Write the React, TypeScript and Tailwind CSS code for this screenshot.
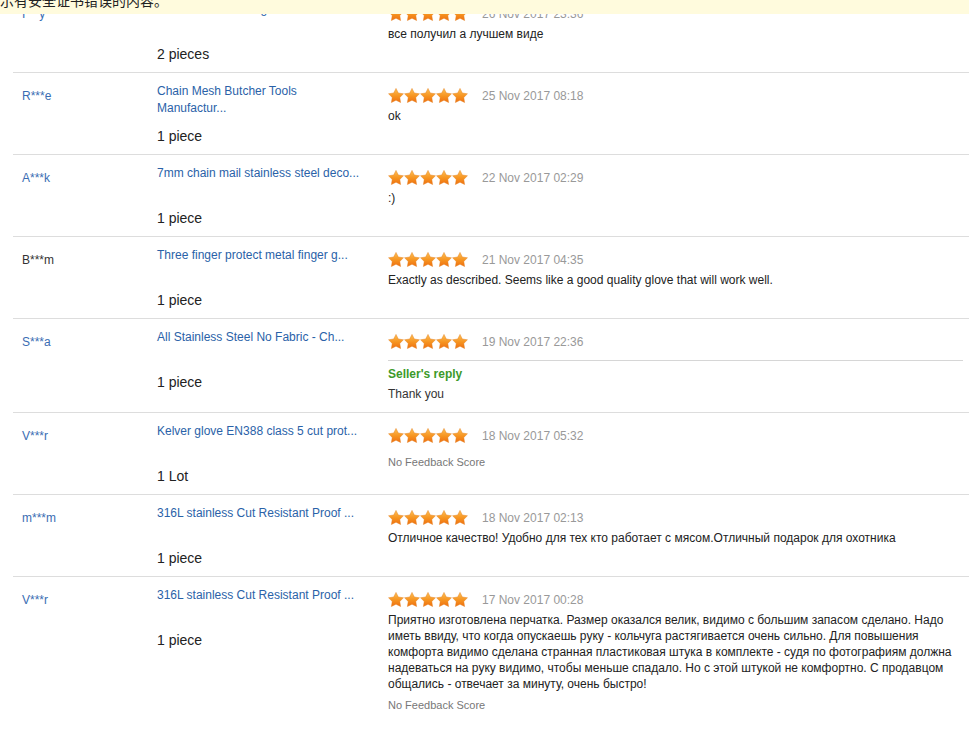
import React from 'react';

type Review = {
  buyer: string;
  buyerDark?: boolean;
  product: string;
  quantity: string;
  date: string;
  comment?: string;
  noScore?: boolean;
  reply?: string;
};

const reviews: Review[] = [
  {
    buyer: 'I***y',
    product: 'Chain mail butcher glove stainless...',
    quantity: '2 pieces',
    date: '26 Nov 2017 23:36',
    comment: 'все получил а лучшем виде',
  },
  {
    buyer: 'R***e',
    product: 'Chain Mesh Butcher Tools Manufactur...',
    quantity: '1 piece',
    date: '25 Nov 2017 08:18',
    comment: 'ok',
  },
  {
    buyer: 'A***k',
    product: '7mm chain mail stainless steel deco...',
    quantity: '1 piece',
    date: '22 Nov 2017 02:29',
    comment: ':)',
  },
  {
    buyer: 'B***m',
    buyerDark: true,
    product: 'Three finger protect metal finger g...',
    quantity: '1 piece',
    date: '21 Nov 2017 04:35',
    comment: 'Exactly as described. Seems like a good quality glove that will work well.',
  },
  {
    buyer: 'S***a',
    product: 'All Stainless Steel No Fabric - Ch...',
    quantity: '1 piece',
    date: '19 Nov 2017 22:36',
    reply: 'Thank you',
  },
  {
    buyer: 'V***r',
    product: 'Kelver glove EN388 class 5 cut prot...',
    quantity: '1 Lot',
    date: '18 Nov 2017 05:32',
    noScore: true,
  },
  {
    buyer: 'm***m',
    product: '316L stainless Cut Resistant Proof ...',
    quantity: '1 piece',
    date: '18 Nov 2017 02:13',
    comment: 'Отличное качество! Удобно для тех кто работает с мясом.Отличный подарок для охотника',
  },
  {
    buyer: 'V***r',
    product: '316L stainless Cut Resistant Proof ...',
    quantity: '1 piece',
    date: '17 Nov 2017 00:28',
    comment:
      'Приятно изготовлена перчатка. Размер оказался велик, видимо с большим запасом сделано. Надо иметь ввиду, что когда опускаешь руку - кольчуга растягивается очень сильно. Для повышения комфорта видимо сделана странная пластиковая штука в комплекте - судя по фотографиям должна надеваться на руку видимо, чтобы меньше спадало. Но с этой штукой не комфортно. С продавцом общались - отвечает за минуту, очень быстро!',
    noScore: true,
  },
];

// fat five-point star, outer radius 12, inner 6
const starPoints = Array.from({ length: 10 }, (_, i) => {
  const r = i % 2 === 0 ? 12 : 6.1;
  const a = (Math.PI / 5) * i - Math.PI / 2;
  return `${(12 + r * Math.cos(a)).toFixed(2)},${(12.6 + r * Math.sin(a)).toFixed(2)}`;
}).join(' ');

function Star() {
  return (
    <svg width="16" height="15" viewBox="0 0 24 23" className="shrink-0">
      <defs>
        <linearGradient id="starFill" x1="0" y1="0" x2="0" y2="1">
          <stop offset="0%" stopColor="#fdbf55" />
          <stop offset="55%" stopColor="#f6931f" />
          <stop offset="100%" stopColor="#ee6f12" />
        </linearGradient>
      </defs>
      <polygon points={starPoints} fill="url(#starFill)" stroke="#e5801f" strokeWidth="0.7" strokeLinejoin="round" />
    </svg>
  );
}

function Stars() {
  return (
    <div className="flex w-[79px] justify-between">
      <Star />
      <Star />
      <Star />
      <Star />
      <Star />
    </div>
  );
}

function ReviewRow({ review, last }: { review: Review; last: boolean }) {
  return (
    <div className={`flex border-b border-[#dddddd] pt-[10px] ${last ? 'pb-[30px]' : 'pb-[8px]'}`}>
      <div className="w-[144px] shrink-0 pl-[9px]">
        <div
          className={`mt-[5px] text-[12px] leading-[16px] ${review.buyerDark ? 'text-[#333333]' : 'text-[#3a6db3]'}`}
        >
          {review.buyer}
        </div>
      </div>
      <div className="w-[231px] shrink-0 pr-[26px]">
        <div className="h-[34px] text-[12px] leading-[17px] text-[#2a62a8]">{review.product}</div>
        <div className="mt-[9px] text-[14px] leading-[20px] text-[#222222]">{review.quantity}</div>
      </div>
      <div className="min-w-0 flex-1 pr-[6px]">
        <div className="mt-[5px] flex h-[15px] items-center">
          <Stars />
          <span className="ml-[15px] text-[12px] leading-[14px] text-[#999999]">{review.date}</span>
        </div>
        {review.comment && (
          <div className="mt-[5px] text-[12px] leading-[16px] text-[#222222]">{review.comment}</div>
        )}
        {review.reply && (
          <div className="mb-[2px]">
            <div className="mt-[11px] border-t border-[#d6d6d6]" />
            <div className="mt-[5px] text-[12px] font-bold leading-[16px] text-[#3c9a2a]">Seller's reply</div>
            <div className="mt-[4px] text-[12px] leading-[16px] text-[#333333]">{review.reply}</div>
          </div>
        )}
        {review.noScore && (
          <div
            className={`${review.comment ? 'mt-[6px]' : 'mt-[12px]'} text-[11px] leading-[14px] text-[#777777]`}
          >
            No Feedback Score
          </div>
        )}
      </div>
    </div>
  );
}

export default function App() {
  return (
    <div
      className="relative h-[733px] overflow-hidden bg-white"
      style={{ fontFamily: '"Liberation Sans", Arial, sans-serif' }}
    >
      <div className="-mt-[9px] ml-[13px]">
        {reviews.map((r, i) => (
          <ReviewRow key={i} review={r} last={i === reviews.length - 1} />
        ))}
      </div>
      <div className="absolute left-0 right-0 top-0 h-[14px] overflow-hidden bg-[#fffbdd]">
        <div
          className="-mt-[10px] whitespace-nowrap text-[14px] leading-[20px] text-[#222222]"
          style={{ fontFamily: '"Noto Sans CJK SC", sans-serif' }}
        >
          示有安全证书错误的内容。
        </div>
      </div>
    </div>
  );
}
